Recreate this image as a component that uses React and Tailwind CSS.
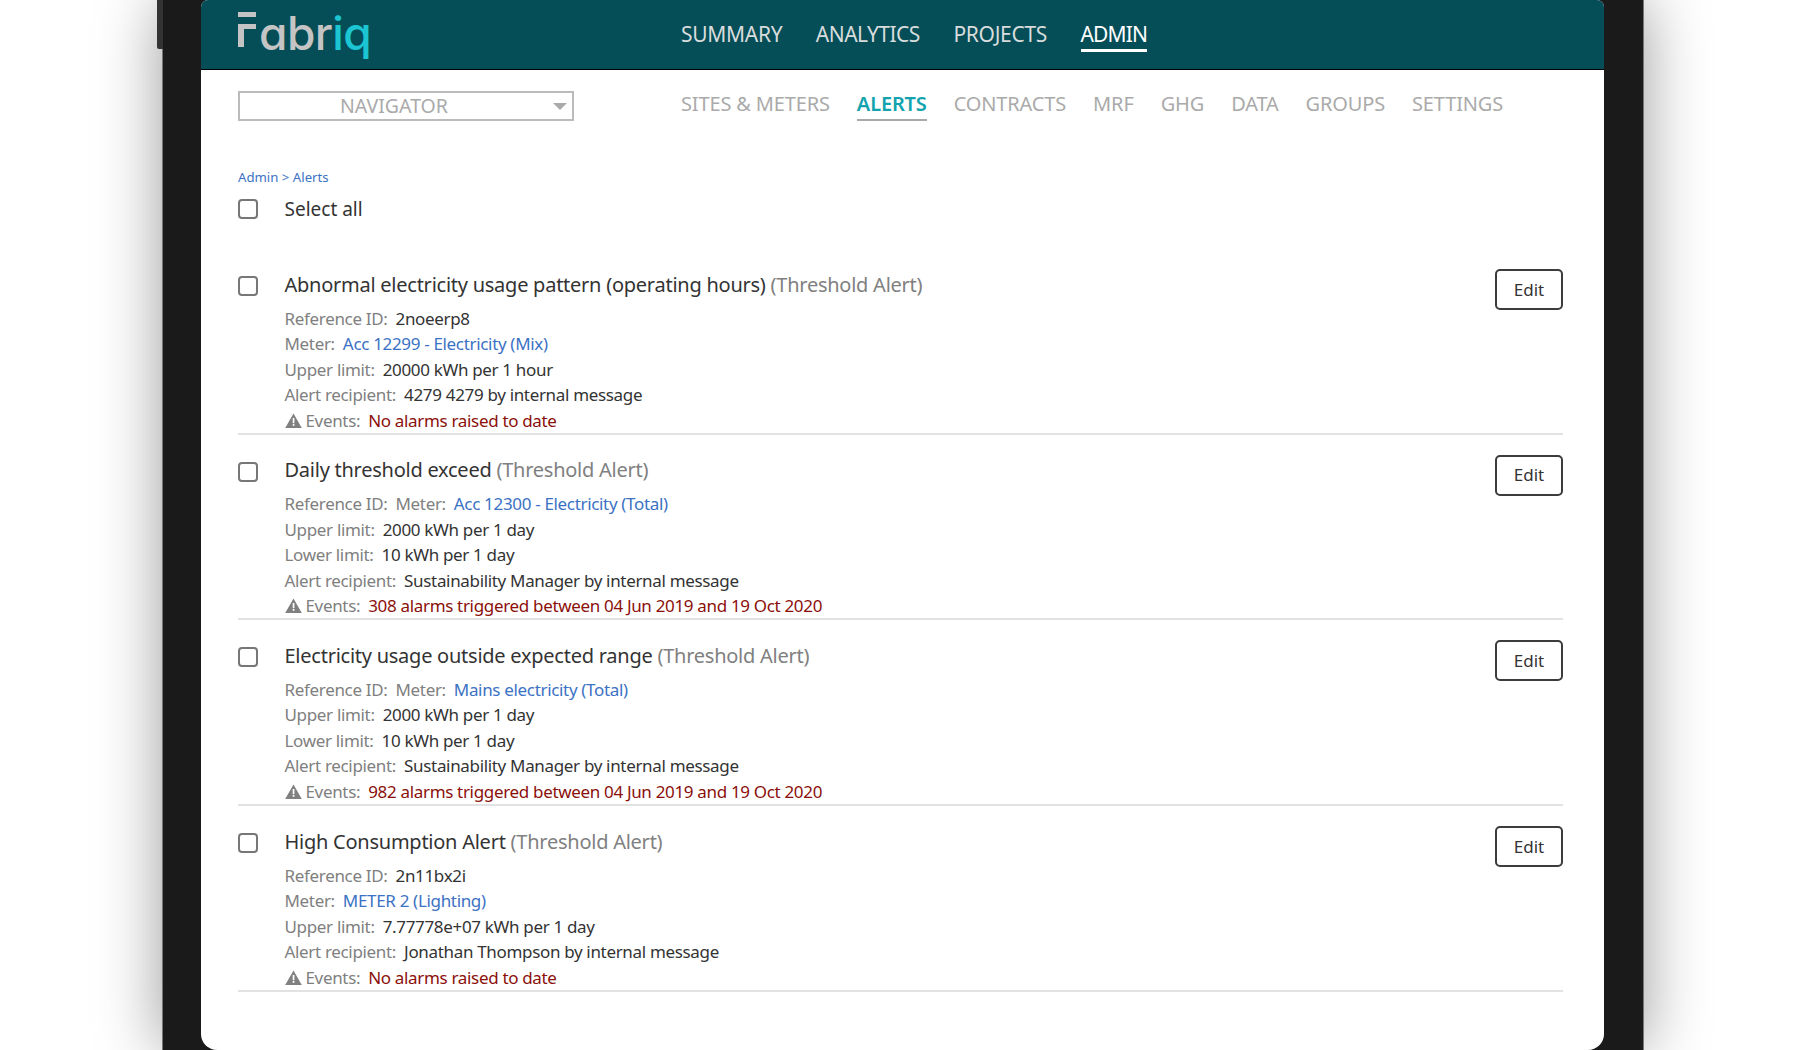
import React from 'react'

const topNav = [
  { name: 'SUMMARY', cls: '' },
  { name: 'ANALYTICS', cls: 'tracking-[-0.5px]' },
  { name: 'PROJECTS', cls: '' },
  { name: 'ADMIN', cls: 'h-[34px] border-b-[3px] border-white text-white tracking-[-0.9px]' },
]
const subNav = ['SITES & METERS', 'ALERTS', 'CONTRACTS', 'MRF', 'GHG', 'DATA', 'GROUPS', 'SETTINGS']

const alerts = [
  {
    name: 'Abnormal electricity usage pattern (operating hours)',
    lines: [
      [{ label: 'Reference ID:', value: '2noeerp8' }],
      [{ label: 'Meter:', link: 'Acc 12299 - Electricity (Mix)' }],
      [{ label: 'Upper limit:', value: '20000 kWh per 1 hour' }],
      [{ label: 'Alert recipient:', value: '4279 4279 by internal message' }],
    ],
    events: 'No alarms raised to date',
  },
  {
    name: 'Daily threshold exceed',
    lines: [
      [{ label: 'Reference ID:' }, { label: 'Meter:', link: 'Acc 12300 - Electricity (Total)' }],
      [{ label: 'Upper limit:', value: '2000 kWh per 1 day' }],
      [{ label: 'Lower limit:', value: '10 kWh per 1 day' }],
      [{ label: 'Alert recipient:', value: 'Sustainability Manager by internal message' }],
    ],
    events: '308 alarms triggered between 04 Jun 2019 and 19 Oct 2020',
  },
  {
    name: 'Electricity usage outside expected range',
    lines: [
      [{ label: 'Reference ID:' }, { label: 'Meter:', link: 'Mains electricity (Total)' }],
      [{ label: 'Upper limit:', value: '2000 kWh per 1 day' }],
      [{ label: 'Lower limit:', value: '10 kWh per 1 day' }],
      [{ label: 'Alert recipient:', value: 'Sustainability Manager by internal message' }],
    ],
    events: '982 alarms triggered between 04 Jun 2019 and 19 Oct 2020',
  },
  {
    name: 'High Consumption Alert',
    lines: [
      [{ label: 'Reference ID:', value: '2n11bx2i' }],
      [{ label: 'Meter:', link: 'METER 2 (Lighting)' }],
      [{ label: 'Upper limit:', value: '7.77778e+07 kWh per 1 day' }],
      [{ label: 'Alert recipient:', value: 'Jonathan Thompson by internal message' }],
    ],
    events: 'No alarms raised to date',
  },
]

const Checkbox = () => (
  <span className="block w-5 h-5 rounded-[4px] border-2 border-[#777] bg-white" />
)

const Logo = () => (
  <div className="flex items-baseline h-[70px] pt-[3px] font-['Inter',sans-serif] font-medium text-[46px] leading-[60px] tracking-[-0.5px] text-[#c4c4c4] [font-feature-settings:'cv11']">
    {/* the f of the logo is a detached bar over a short hooked stem */}
    <svg width="18" height="36" viewBox="0 0 18 36" className="mr-[3px] self-start mt-[9px]">
      <rect x="0" y="0" width="18" height="5" fill="#c4c4c4" />
      <path d="M0 35V12H18V17H6V35Z" fill="#c4c4c4" />
    </svg>
    <span>abr</span>
    <span className="text-[#1cc5d2]">iq</span>
  </div>
)

const AlertRow = ({ alert }) => (
  <div className="flex h-[185.7px] border-b-2 border-[#e2e2e2]">
    <div className="w-[46.5px] shrink-0 pt-[27px]">
      <Checkbox />
    </div>
    <div className="flex-1 pt-[20.5px]">
      <div className="text-[20px] leading-[30px] tracking-[-0.25px] text-[#333]">
        {alert.name} <span className="text-[#808080]">(Threshold Alert)</span>
      </div>
      <div className="mt-[6px] text-[17px] leading-[25.5px] tracking-[-0.33px]">
        {alert.lines.map((line, i) => (
          <div key={i} className="flex gap-2">
            {line.map((part, j) => (
              <span key={j} className="flex gap-2">
                <span className="text-[#808080]">{part.label}</span>
                {part.value && <span className="text-[#333]">{part.value}</span>}
                {part.link && <span className="text-[#3b72c4]">{part.link}</span>}
              </span>
            ))}
          </div>
        ))}
        <div className="flex items-center gap-2">
          <span className="flex items-center gap-[4px] text-[#808080]">
            <svg width="17" height="15" viewBox="0 0 17 15">
              <path d="M8.5 0.5L16.8 15H0.2Z" fill="#808080" />
              <rect x="7.7" y="5" width="1.7" height="5.2" fill="#fff" />
              <rect x="7.7" y="11" width="1.7" height="1.8" fill="#fff" />
            </svg>
            Events:
          </span>
          <span className="text-[#8b0f0a]">{alert.events}</span>
        </div>
      </div>
    </div>
    <button className="self-start mt-[20px] w-[68px] h-[41px] rounded-[5px] border-2 border-[#3c3c3c] bg-white text-[17px] text-[#333]">
      Edit
    </button>
  </div>
)

export default function App() {
  return (
    <div className="relative h-[1050px] w-[1818px] overflow-hidden bg-white font-['Noto_Sans',sans-serif]">
      {/* tablet frame */}
      <div className="relative ml-[162px] h-[1050px] w-[1482px] border-x border-[#777] bg-[#1a1a1a] px-[38px] shadow-[0_0_60px_rgba(0,0,0,0.4)]">
        <div className="absolute -left-[6px] top-0 h-[49px] w-[6px] rounded-bl-[2px] bg-[#333]" />
        <div className="flex h-full w-[1403px] flex-col overflow-hidden rounded-t-[7px] rounded-b-[16px] bg-white">
          <header className="flex h-[70px] shrink-0 items-start border-b border-black bg-[#054e58] pl-[37px]">
            <div className="w-[443px]">
              <Logo />
            </div>
            <nav className="flex gap-[33.5px] pt-[18px] text-[21px] leading-[32px] tracking-[-0.3px] text-[#d8dcdc]">
              {topNav.map(item => (
                <span key={item.name} className={item.cls}>
                  {item.name}
                </span>
              ))}
            </nav>
          </header>

          <div className="flex-1 px-[37px]">
            <div className="flex h-[68px] items-start">
              <div className="mt-[21px] flex h-[30px] w-[336px] items-center border-2 border-[#bbb] text-[19.5px] text-[#aaa]">
                <span className="flex-1 pr-[5px] text-center">NAVIGATOR</span>
                <span className="mr-[5px] h-0 w-0 border-x-[7px] border-t-[7px] border-x-transparent border-t-[#aaa]" />
              </div>
              <nav className="ml-[107px] flex gap-[27px] pt-[18px] text-[20px] leading-[32px] tracking-[-0.15px] text-[#aaa]">
                {subNav.map(item => (
                  <span
                    key={item}
                    className={item === 'ALERTS' ? 'h-[33px] border-b-2 border-[#aaa] font-semibold text-[#12a3ae]' : ''}
                  >
                    {item}
                  </span>
                ))}
              </nav>
            </div>

            <div className="mt-[29px] text-[13.2px] leading-[20px] text-[#3b72c4]">Admin &gt; Alerts</div>
            <div className="mt-[10px] flex h-[24px] items-center">
              <div className="w-[46.5px]">
                <Checkbox />
              </div>
              <span className="text-[19px] text-[#333]">Select all</span>
            </div>

            <div className="mt-[28px] w-[1325px]">
              {alerts.map(alert => (
                <AlertRow key={alert.name} alert={alert} />
              ))}
            </div>
          </div>
        </div>
      </div>
    </div>
  )
}
